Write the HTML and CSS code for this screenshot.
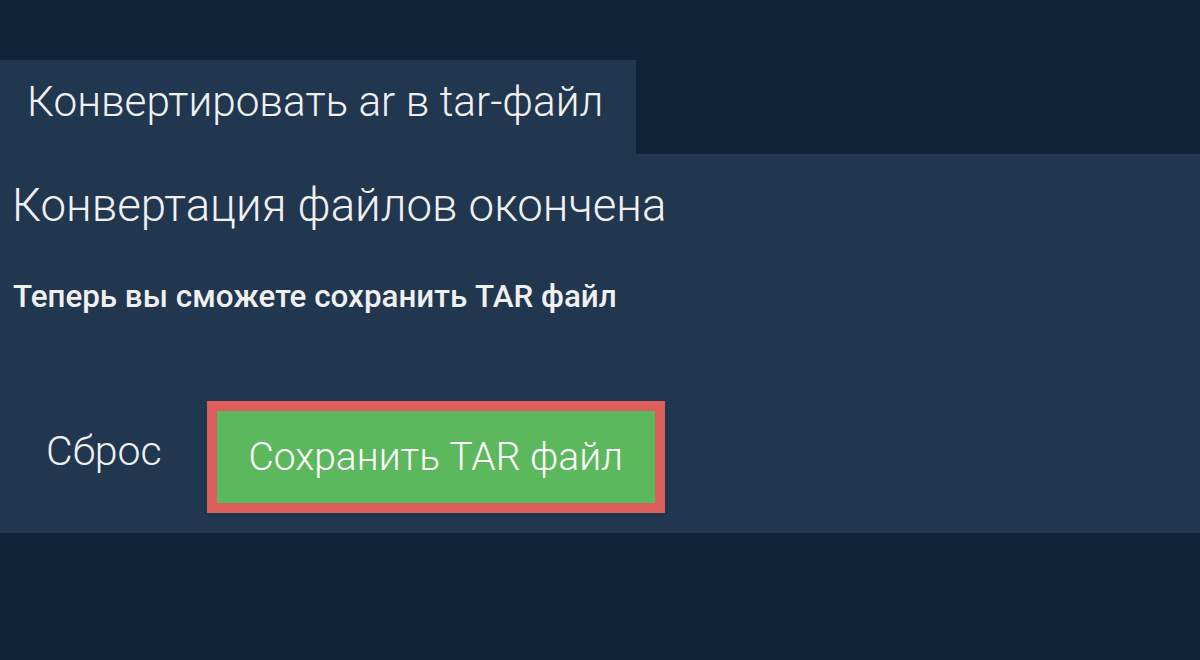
FILE: index.html
```html
<!DOCTYPE html>
<html lang="ru">
<head>
<meta charset="utf-8">
<link rel="stylesheet" href="styles.css">
</head>
<body>
<div class="page">
  <div class="tab">Конвертировать ar в tar-файл</div>
  <div class="panel">
    <h1 class="title">Конвертация файлов окончена</h1>
    <p class="note">Теперь вы сможете сохранить TAR файл</p>
    <div class="actions">
      <span class="reset">Сброс</span>
      <button class="save">Сохранить TAR файл</button>
    </div>
  </div>
</div>
</body>
</html>
```
FILE: styles.css
```css
html, body {
  margin: 0;
  padding: 0;
  background: #0f2439;
  font-family: "Roboto", "Inter", sans-serif;
  color: #f0f0f0;
}
.page {
  padding-top: 60px;
}
.tab {
  display: inline-block;
  width: 636px;
  height: 94px;
  box-sizing: border-box;
  padding-left: 27px;
  padding-top: 17px;
  background: #21364f;
  font-size: 42.3px;
  font-weight: 300;
  line-height: 50px;
  vertical-align: top;
}
.panel {
  background: #21364f;
  height: 379px;
  box-sizing: border-box;
  padding: 22px 12px 0 12px;
}
.title {
  margin: 0;
  font-size: 45.6px;
  font-weight: 300;
  line-height: 60px;
}
.note {
  margin: 43px 1px 0;
  font-size: 31.4px;
  font-weight: 500;
  line-height: 36px;
}
.actions {
  display: flex;
  align-items: center;
  margin-top: 86px;
}
.reset {
  font-size: 41px;
  font-weight: 300;
  margin: 0 45px 12px 34px;
}
.save {
  width: 458px;
  height: 112px;
  box-sizing: border-box;
  border: 10px solid #dc5f5b;
  background: #5cb85c;
  color: #fff;
  font-family: inherit;
  font-size: 39px;
  font-weight: 300;
  padding: 0;
}
```
